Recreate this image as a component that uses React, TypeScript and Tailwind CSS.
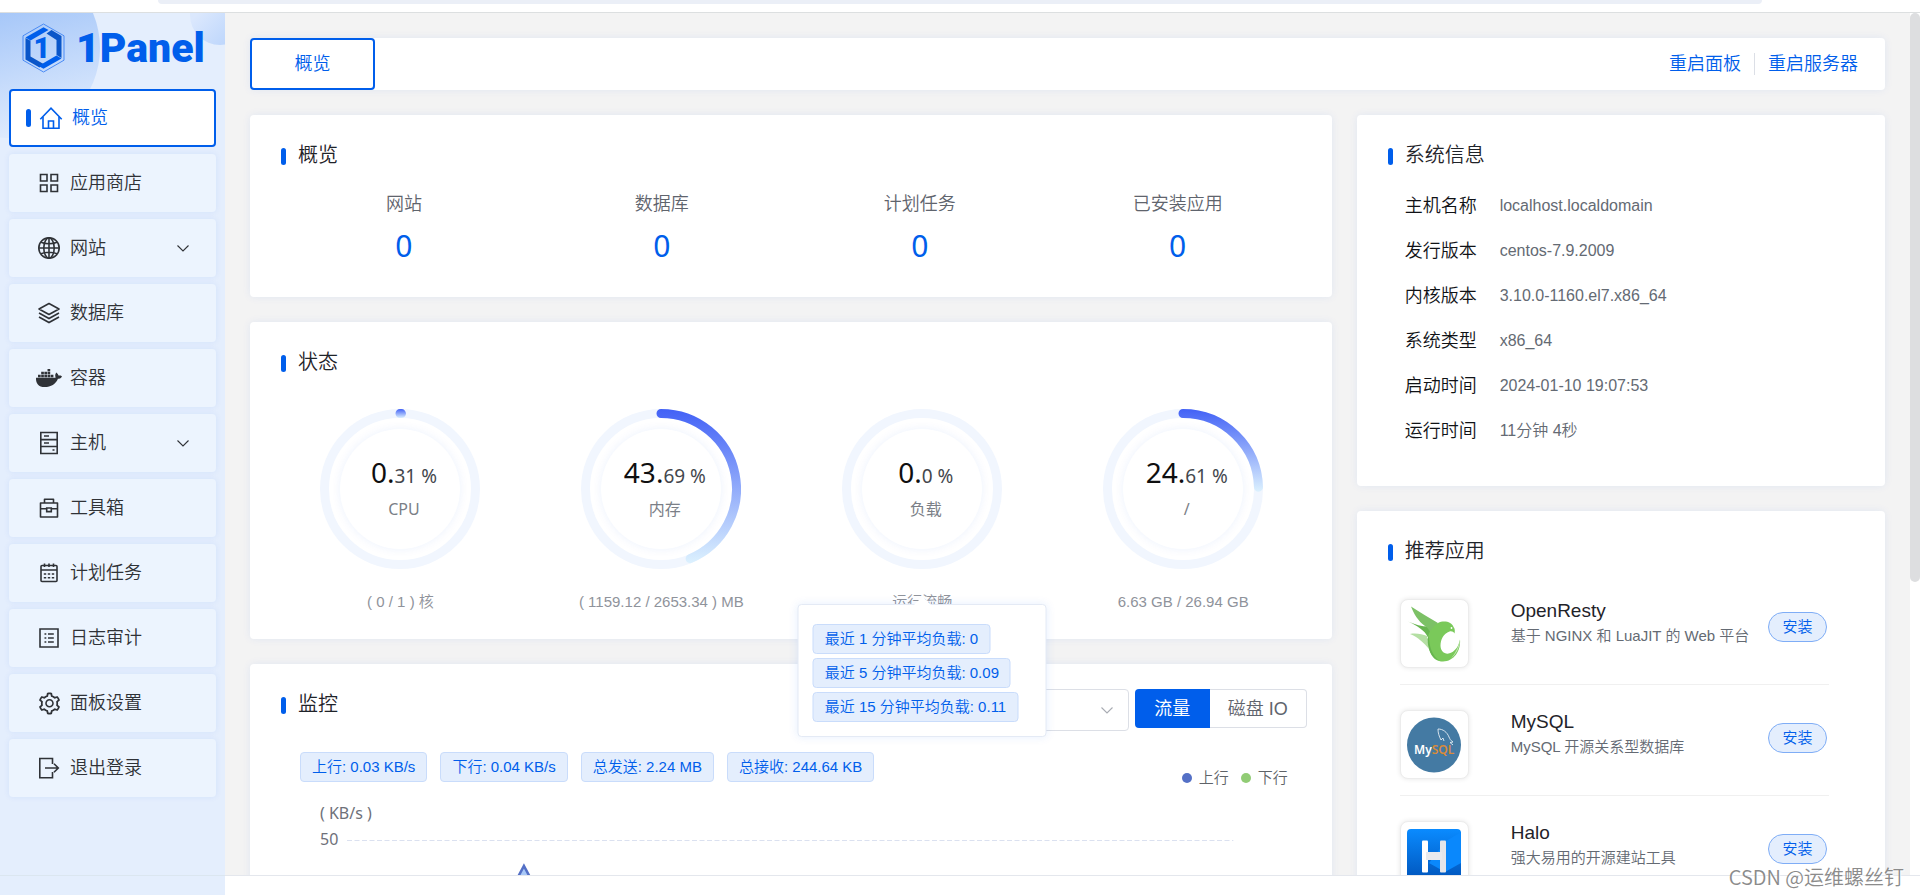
import type { ReactNode } from "react";
import { FaDocker } from "react-icons/fa";
import { AiOutlineSetting } from "react-icons/ai";

function Icon({ children, size = 24 }: { children: ReactNode; size?: number }) {
  return (
    <svg
      width={size}
      height={size}
      viewBox="0 0 24 24"
      fill="none"
      stroke="currentColor"
      strokeWidth="1.6"
    >
      {children}
    </svg>
  );
}

const HomeIcon = () => (
  <Icon>
    <path d="M1.3 13.2 12 2.2l10.700 11" />
    <path d="M4 11v11.200h16V11" />
    <path d="M9.500 22v-7h5v7" />
  </Icon>
);

const StoreIcon = () => (
  <Icon>
    <path d="M3.500 3.500h6.500v6.500H3.500zM14 3.500h6.500v6.500H14zM3.500 14h6.500v6.500H3.500zM14 14h6.500v6.500H14z" />
  </Icon>
);

const WebsiteIcon = () => (
  <Icon>
    <circle cx="12" cy="12" r="10.2" />
    <ellipse cx="12" cy="12" rx="5.200" ry="10.200" />
    <path d="M12 1.800v20.400M1.800 12h20.400M4 6.200c4.500 2 11.500 2 16 0M4 17.800c4.500-2 11.500-2 16 0" />
  </Icon>
);

const DatabaseIcon = () => (
  <Icon>
    <path d="M12 2.500 22 8l-10 5.500L2 8z" strokeLinejoin="round" />
    <path d="m2 12 10 5.500L22 12M2 16l10 5.500L22 16" />
  </Icon>
);

const HostIcon = () => (
  <Icon>
    <path d="M3.800 1.500h16.400v21H3.800zM3.800 8.600h16.400M3.800 15.500h16.400M7 5h5M7 12h5M15.500 19h2" />
  </Icon>
);

const ToolboxIcon = () => (
  <Icon>
    <path d="M7.500 7V3.200h9V7M3.500 7h17v14h-17z" strokeLinejoin="round" />
    <path d="M3.500 12.800h6M14.500 12.800h6M9.700 12v3.600h4.600V12z" />
  </Icon>
);

const CronjobIcon = () => (
  <Icon>
    <rect x="4" y="4.500" width="16" height="16" rx="1" />
    <path d="M4 9h16M7.500 2.500v3.500M12 2.500v3.500M16.500 2.500v3.500" />
    <path d="M6.800 13h2.400M10.800 13h2.400M14.800 13h2.400M6.800 16.800h2.400M10.800 16.800h2.400M14.800 16.800h2.400" />
  </Icon>
);

const LogIcon = () => (
  <Icon>
    <path d="M3 3h18v18H3zM7.500 8h1.800M7.500 12h1.800M7.500 16h1.800M11 8h5.800M11 12h5.800M11 16h5.800" />
  </Icon>
);

const LogoutIcon = () => (
  <Icon>
    <path d="M15.500 8V2.500H2.800v19.200h12.700V16M8 12h13M17 7.800l4.300 4.200-4.300 4.200" />
  </Icon>
);

function Chevron({ className }: { className: string }) {
  return (
    <svg
      className={className}
      width="14"
      height="14"
      viewBox="0 0 14 14"
      fill="none"
      stroke="currentColor"
      strokeWidth="1.1"
    >
      <path d="m1.500 4.500 5.500 5.500 5.500-5.500" />
    </svg>
  );
}

const menus = [
  { text: "应用商店", icon: <StoreIcon /> },
  { text: "网站", icon: <WebsiteIcon />, children: true },
  { text: "数据库", icon: <DatabaseIcon /> },
  { text: "容器", icon: <FaDocker size={26} /> },
  { text: "主机", icon: <HostIcon />, children: true },
  { text: "工具箱", icon: <ToolboxIcon /> },
  { text: "计划任务", icon: <CronjobIcon /> },
  { text: "日志审计", icon: <LogIcon /> },
  { text: "面板设置", icon: <AiOutlineSetting size={25} /> },
  { text: "退出登录", icon: <LogoutIcon /> },
];

function Logo() {
  return (
    <div className="flex items-center h-[76px] pl-[22px] pb-[7px] gap-[11px]">
      <svg width="43" height="50" viewBox="0 0 43 50">
        <path
          d="M21.500 1 42 12.800v24.400L21.500 49 1 37.200V12.800z"
          fill="none"
          stroke="#4a8bf5"
          strokeWidth="1"
        />
        <path d="M3.500 14.500 21.500 4.200l5 2.800L8.500 17.500z" fill="#005eeb" />
        <path d="M3.500 15v21.500l14 8 4-3.500-13-7.500V17.800z" fill="#0a56c9" />
        <path d="M39.500 35.500 21.500 45.800l-5-2.800 18-10.500z" fill="#005eeb" />
        <path d="m24.500 10.500 5-3.500 10 6v22l-5-3V17z" fill="#0a56c9" />
        <text
          x="20"
          y="35"
          textAnchor="middle"
          fontFamily="Roboto"
          fontWeight="900"
          fontSize="29"
          fill="#005eeb"
        >
          1
        </text>
      </svg>
      <span className="font-[Roboto] font-black text-[41px] leading-[48px] text-[#005eeb]">
        1Panel
      </span>
    </div>
  );
}

function SideBar() {
  return (
    <aside className="w-[225px] shrink-0 relative overflow-hidden bg-[#e4eefd] flex flex-col">
      <div className="absolute -left-20 -top-[55px] size-[180px] rounded-full bg-linear-165 from-[#a3c5f8] from-30% to-[#dfebfd] to-90%" />
      <div className="absolute left-[190px] -top-7 size-[60px] rounded-full bg-linear-to-br from-[#dbe8fd] from-30% to-[#b2cffb]" />
      <div className="relative flex-1">
        <Logo />
        <nav className="flex flex-col gap-[7px] px-[9px] text-lg text-[#2f3237]">
          <a
            href="#home"
            className="flex items-center h-[58px] pl-[15px] rounded bg-white border-2 border-[#005eeb] text-[#005eeb]"
          >
            <span className="w-[5px] h-[18px] mr-1.5 rounded-sm bg-[#005eeb]" />
            <span className="w-7 mr-[7px] flex justify-center">
              <HomeIcon />
            </span>
            概览
          </a>
          {menus.map((m) => (
            <a
              key={m.text}
              href="#menu"
              className="flex items-center h-[58px] pl-[26px] pr-[26px] rounded bg-[#ecf4fe] shadow-[0_0_6px_rgba(0,94,235,0.08)]"
            >
              <span className="w-7 mr-[7px] flex justify-center">{m.icon}</span>
              {m.text}
              {m.children && <Chevron className="ml-auto" />}
            </a>
          ))}
        </nav>
      </div>
      <div className="h-5 border-t border-[#dbe6f0]" />
    </aside>
  );
}

function Card({ children }: { children: ReactNode }) {
  return (
    <section className="bg-white rounded shadow-[0_0_8px_rgba(0,94,235,0.08)]">{children}</section>
  );
}

function CardTitle({ title }: { title: string }) {
  return (
    <h2 className="flex items-center gap-3 pt-[26px] pl-[31px] text-xl leading-7 text-[#1f2329]">
      <span className="w-[5px] h-[17px] mt-0.5 rounded-sm bg-[#005eeb]" />
      {title}
    </h2>
  );
}

function Tag({ children }: { children: ReactNode }) {
  return (
    <span className="h-[30px] px-[11px] flex items-center rounded border border-[#c9dcfb] bg-[#e4eefd] text-[15px] text-[#005eeb] whitespace-nowrap">
      {children}
    </span>
  );
}

const counts = ["网站", "数据库", "计划任务", "已安装应用"];

function Overview() {
  return (
    <Card>
      <CardTitle title="概览" />
      <div className="grid grid-cols-4 px-[25px] pt-[21px] pb-[33px] text-center">
        {counts.map((c) => (
          <div key={c}>
            <p className="text-lg leading-7 text-[#5f646d]">{c}</p>
            <a
              href="#count"
              className="block mt-[10px] font-['Noto_Sans'] font-normal text-[30px] leading-9 text-[#005eeb]"
            >
              0
            </a>
          </div>
        ))}
      </div>
    </Card>
  );
}

const gauges = [
  { name: "CPU", value: 0.31, int: "0.", dec: "31 %", note: "( 0 / 1 ) 核" },
  { name: "内存", value: 43.69, int: "43.", dec: "69 %", note: "( 1159.12 / 2653.34 ) MB" },
  { name: "负载", value: 0, int: "0.", dec: "0 %", note: "运行流畅", loads: true },
  { name: "/", value: 24.61, int: "24.", dec: "61 %", note: "6.63 GB / 26.94 GB" },
];

function Ring({ id, value }: { id: string; value: number }) {
  const r = 75.5;
  const angle = (value / 100) * 2 * Math.PI;
  const x = 80 + r * Math.sin(angle);
  const y = 80 - r * Math.cos(angle);
  return (
    <svg className="absolute inset-0" width="160" height="160" viewBox="0 0 160 160" fill="none">
      <defs>
        <linearGradient id={id} gradientUnits="userSpaceOnUse" x1="0" y1="0" x2="0" y2={y + 4.5}>
          <stop offset="0" stopColor="#4261f6" />
          <stop offset="1" stopColor="#dcf1fe" />
        </linearGradient>
      </defs>
      <circle cx="80" cy="80" r={r} stroke="#f1f6fe" strokeWidth="9" />
      {value > 0 && (
        <path
          d={`M80 ${80 - r}A${r} ${r} 0 0 1 ${x} ${y}`}
          stroke={`url(#${id})`}
          strokeWidth="9"
          strokeLinecap="round"
        />
      )}
    </svg>
  );
}

function LoadPopover() {
  return (
    <div className="absolute z-10 top-[14px] left-1/2 -translate-x-1/2 w-[249px] pl-[14px] pt-[19px] pb-[14px] flex flex-col items-start gap-1 rounded border border-[#e4eaf5] bg-white shadow-[0_0_10px_rgba(0,94,235,0.1)]">
      <span className="absolute -top-[6px] left-1/2 -translate-x-1/2 size-3 rotate-45 bg-white" />
      <Tag>最近 1 分钟平均负载: 0</Tag>
      <Tag>最近 5 分钟平均负载: 0.09</Tag>
      <Tag>最近 15 分钟平均负载: 0.11</Tag>
    </div>
  );
}

function Status() {
  return (
    <Card>
      <CardTitle title="状态" />
      <div className="grid grid-cols-4 pl-5 pr-[18px] pt-[33px] pb-[25px]">
        {gauges.map((g, i) => (
          <div key={g.name} className="flex flex-col items-center">
            <div className="relative size-[160px] p-5">
              <Ring id={`ring-${i}`} value={g.value} />
              <div className="size-[120px] pl-[7px] pb-1 flex flex-col items-center justify-center gap-[3px] rounded-full bg-white shadow-[0_0_10px_rgba(0,94,235,0.08)] font-['Noto_Sans','Noto_Sans_CJK_SC',sans-serif] font-normal">
                <p className="text-[28px] leading-9 text-[#0f0f10] whitespace-nowrap">
                  {g.int}
                  <span className="text-[19px] leading-9 text-[#44474d]">{g.dec}</span>
                </p>
                <p className="text-base leading-6 text-[#7b7f87]">{g.name}</p>
              </div>
            </div>
            <div className="relative mt-[21px]">
              <p className="text-[15px] leading-6 text-[#8f939b]">{g.note}</p>
              {g.loads && <LoadPopover />}
            </div>
          </div>
        ))}
      </div>
    </Card>
  );
}

function Monitor() {
  return (
    <Card>
      <div className="flex items-start justify-between pr-[25px]">
        <CardTitle title="监控" />
        <div className="flex items-start pt-[25px] text-lg">
          <label className="relative mr-[6px]">
            <select
              aria-label="网卡"
              className="appearance-none w-[200px] h-[42px] pl-4 rounded border border-[#dcdfe6] bg-white text-[#646a73]"
            >
              <option>所有</option>
            </select>
            <Chevron className="absolute right-[15px] top-[14px] text-[#a8abb2]" />
          </label>
          <button className="w-[75px] h-[39px] rounded-l bg-[#005eeb] font-normal text-white">
            流量
          </button>
          <button className="w-[97px] h-[39px] rounded-r border border-l-0 border-[#dcdfe6] text-[#5f646d]">
            磁盘 IO
          </button>
        </div>
      </div>
      <div className="flex items-start justify-between pl-[50px] pr-11 mt-[21px]">
        <div className="flex gap-[13px]">
          <Tag>上行: 0.03 KB/s</Tag>
          <Tag>下行: 0.04 KB/s</Tag>
          <Tag>总发送: 2.24 MB</Tag>
          <Tag>总接收: 244.64 KB</Tag>
        </div>
        <div className="flex gap-3 mt-4 text-[15px] leading-5 text-[#5f6368]">
          <span className="flex items-center gap-[7px]">
            <i className="size-[10px] rounded-full bg-[#5470c6]" />
            上行
          </span>
          <span className="flex items-center gap-[7px]">
            <i className="size-[10px] rounded-full bg-[#91cc75]" />
            下行
          </span>
        </div>
      </div>
      <div className="pl-[70px] pr-[98px] pt-[15px] font-['Noto_Sans'] font-normal text-base leading-5 text-[#6e7079]">
        <p>( KB/s )</p>
        <div className="flex items-center gap-[9px] mt-1.5">
          <span>50</span>
          <svg className="flex-1 h-px mt-0.5">
            <line
              x1="0"
              y1="0.5"
              x2="100%"
              y2="0.5"
              stroke="#dbe1f0"
              strokeDasharray="5 2.5"
            />
          </svg>
        </div>
        <div className="pl-[27px]">
          <svg className="block w-full h-[180px]" viewBox="0 0 887 180" preserveAspectRatio="none">
            <path d="M0 178h90L177 17l87 161h623v2H0z" fill="#a8c8f7" />
            <path d="M0 178h90L177 17l87 161h623" fill="none" stroke="#5470c6" strokeWidth="2.500" />
          </svg>
        </div>
      </div>
    </Card>
  );
}

const systemInfo = [
  ["主机名称", "localhost.localdomain"],
  ["发行版本", "centos-7.9.2009"],
  ["内核版本", "3.10.0-1160.el7.x86_64"],
  ["系统类型", "x86_64"],
  ["启动时间", "2024-01-10 19:07:53"],
  ["运行时间", "11分钟 4秒"],
];

function SystemInfo() {
  return (
    <Card>
      <CardTitle title="系统信息" />
      <dl className="flex flex-col gap-[17px] pl-12 pt-[23px] pb-[41px]">
        {systemInfo.map(([k, v]) => (
          <div key={k} className="flex items-center leading-7">
            <dt className="w-[95px] text-lg leading-7 text-[#101216]">{k}</dt>
            <dd className="text-base leading-7 text-[#646a73]">{v}</dd>
          </div>
        ))}
      </dl>
    </Card>
  );
}

const OpenRestyLogo = () => (
  <svg width="54" height="56" viewBox="0 0 54 56">
    <path d="M3 28c6-1 12 0 17 2l2 13C17 37 11 31 3 28z" fill="#b4dfa3" />
    <path d="M1 15.500c7 3 14 5 20 5l4 4 5 26c-7-5-8-13-9-19-3-7-11-12-20-16z" fill="#67b550" />
    <path d="M4 .5c9 6 18 11 27 16.500l-7 13c0-4-3-8-6-10C11 15 7 8 4 .5z" fill="#7cc166" />
    <path
      d="M31 17c6-3 14-1 15.500 4 1.500 1.500 1.500 4 1 6.500-1-2-3-2.500-5-2-6 2-9 8-9 14 0 7 6 10 11 7 4-2 7-6 8.500-13 1 11-6 22-17 22-11 0-14-10-15-20-1-7 3-14 10-18.500z"
      fill="#7ac95a"
    />
    <path d="M22 30c0 10 3 20 11 25-10-3-12-13-12.500-22z" fill="#67b550" />
    <path d="M53 33.500c0 8-4 15-9 19 4-5 7-10 9-19z" fill="#c9e8bc" />
    <circle cx="44.500" cy="22" r="0.9" fill="#fff" />
  </svg>
);

const MysqlLogo = () => (
  <svg width="54" height="56" viewBox="0 0 54 56">
    <ellipse cx="27" cy="28" rx="27" ry="27.500" fill="#447aa3" />
    <path
      d="M34 23c-2-4-3-7-3-11 5 0 9 3 11 8 1 2 1 3 4 5l-3 .500 3 2.500M34 23l2-2 1 3"
      fill="none"
      stroke="#e4edf4"
      strokeWidth="0.9"
    />
    <text x="7" y="36.500" fontFamily="Noto Sans" fontSize="12" fontWeight="600" fill="#fff">
      My<tspan fill="#d98a3a">SQL</tspan>
    </text>
  </svg>
);

const HaloLogo = () => (
  <svg width="54" height="54" viewBox="0 0 54 54">
    <defs>
      <linearGradient id="halo" x1="0" y1="0" x2="0" y2="1">
        <stop offset="0" stopColor="#0a8bff" />
        <stop offset="1" stopColor="#0052b8" />
      </linearGradient>
    </defs>
    <rect width="54" height="54" rx="4" fill="url(#halo)" />
    <path d="M39 12 54 3v31L38 43l-16-9z" fill="#0a88fc" />
    <rect x="15" y="11.500" width="6" height="32" rx="1" fill="#fff" />
    <rect x="33" y="11.500" width="6" height="32" rx="1" fill="#e4e6ea" />
    <rect x="19" y="23" width="16" height="8" fill="#e8eaee" />
  </svg>
);

const apps = [
  { name: "OpenResty", desc: "基于 NGINX 和 LuaJIT 的 Web 平台", logo: <OpenRestyLogo /> },
  { name: "MySQL", desc: "MySQL 开源关系型数据库", logo: <MysqlLogo /> },
  { name: "Halo", desc: "强大易用的开源建站工具", logo: <HaloLogo /> },
];

function Apps() {
  return (
    <Card>
      <CardTitle title="推荐应用" />
      <ul className="pl-[43px] pr-14 pt-[9px]">
        {apps.map((a) => (
          <li
            key={a.name}
            className="flex items-start pt-[25px] pb-4 border-b border-[#f0f0f0]"
          >
            <span className="size-[69px] shrink-0 flex items-center justify-center rounded-lg bg-white border border-[#ececec] shadow-[0_0_5px_rgba(0,0,0,0.1)]">
              {a.logo}
            </span>
            <div className="ml-[42px]">
              <h3 className="text-[19px] leading-6 text-[#1f2329]">{a.name}</h3>
              <p className="mt-px text-[15px] leading-6 text-[#646a73] whitespace-nowrap">{a.desc}</p>
            </div>
            <button className="w-[59px] h-[30px] shrink-0 mt-[13px] ml-auto mr-0.5 rounded-full border border-[#7fadf6] bg-[#e4eefd] text-[15px] text-[#005eeb]">
              安装
            </button>
          </li>
        ))}
      </ul>
    </Card>
  );
}

export default function App() {
  return (
    <div className="relative h-screen flex flex-col bg-white font-['Liberation_Sans','Noto_Sans_CJK_SC',sans-serif] font-[350]">
      <header className="h-[13px] shrink-0 px-[158px] border-b border-[#dcdfe0]">
        <div className="h-1 rounded-b-full bg-[#ebeff7]" />
      </header>
      <div className="flex flex-1 min-h-0">
        <SideBar />
        <div className="flex-1 min-w-0 flex flex-col">
          <div className="flex flex-1 min-h-0 overflow-hidden">
            <main className="flex-1 min-w-0 p-[25px] bg-[#f3f3f3]">
              <div className="flex items-center h-[52px] pr-[27px] mb-[25px] bg-white rounded shadow-[0_0_8px_rgba(0,94,235,0.08)] text-lg text-[#005eeb]">
                <button className="w-[125px] h-full rounded border-2 border-[#005eeb]">概览</button>
                <a href="#panel" className="ml-auto">
                  重启面板
                </a>
                <span className="w-px h-[22px] mx-[13px] bg-[#dcdfe6]" />
                <a href="#server">重启服务器</a>
              </div>
              <div className="grid grid-cols-3 items-start gap-[25px]">
                <div className="col-span-2 flex flex-col gap-[25px]">
                  <Overview />
                  <Status />
                  <Monitor />
                </div>
                <div className="flex flex-col gap-[25px]">
                  <SystemInfo />
                  <Apps />
                </div>
              </div>
            </main>
            <div className="w-[10px] shrink-0 bg-white">
              <div className="h-[66%] rounded-full bg-[#dddee0]" />
            </div>
          </div>
          <div className="h-5 shrink-0 border-t border-[#e4e7ed]" />
        </div>
      </div>
      <p className="absolute right-4 bottom-1 font-['Noto_Sans_CJK_SC',sans-serif] text-xl leading-7 text-[#8b8b8b] [text-shadow:1px_1px_1px_#fff]">
        CSDN @运维螺丝钉
      </p>
    </div>
  );
}
